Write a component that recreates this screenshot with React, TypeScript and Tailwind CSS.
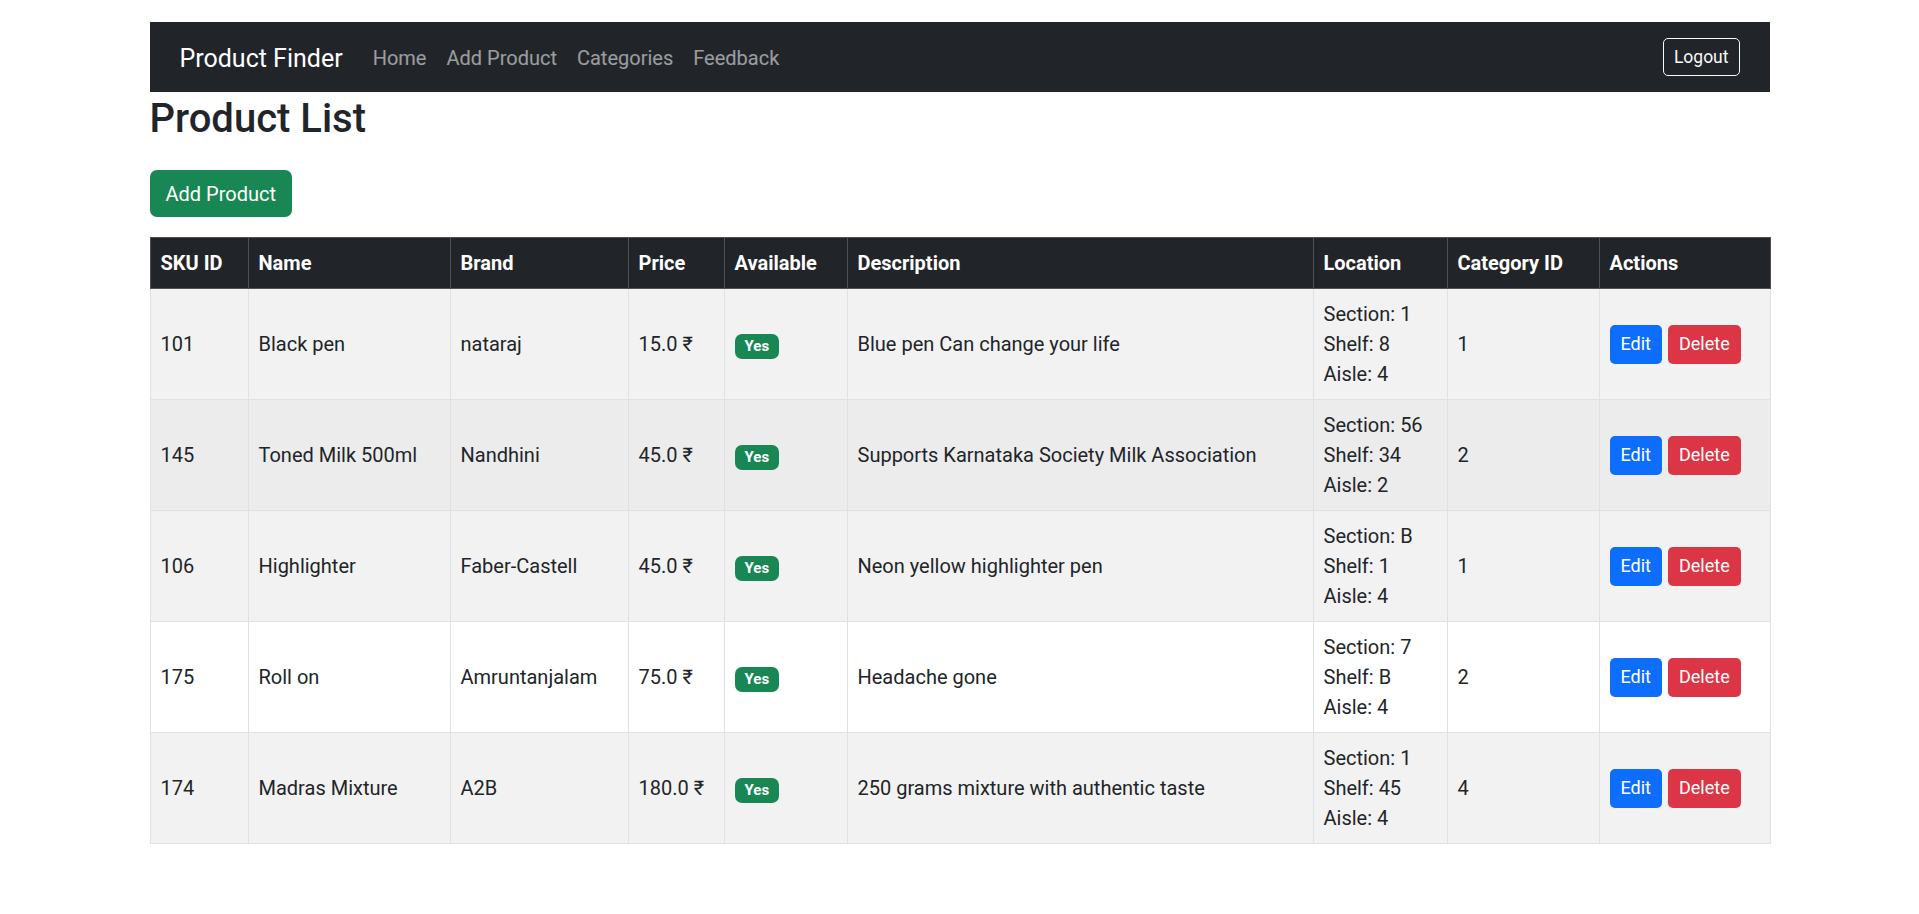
import React from "react";

type Product = {
  sku: number;
  name: string;
  brand: string;
  price: string;
  description: string;
  section: string;
  shelf: string;
  aisle: string;
  categoryId: number;
};

const products: Product[] = [
  { sku: 101, name: "Black pen", brand: "nataraj", price: "15.0", description: "Blue pen Can change your life", section: "1", shelf: "8", aisle: "4", categoryId: 1 },
  { sku: 145, name: "Toned Milk 500ml", brand: "Nandhini", price: "45.0", description: "Supports Karnataka Society Milk Association", section: "56", shelf: "34", aisle: "2", categoryId: 2 },
  { sku: 106, name: "Highlighter", brand: "Faber-Castell", price: "45.0", description: "Neon yellow highlighter pen", section: "B", shelf: "1", aisle: "4", categoryId: 1 },
  { sku: 175, name: "Roll on", brand: "Amruntanjalam", price: "75.0", description: "Headache gone", section: "7", shelf: "B", aisle: "4", categoryId: 2 },
  { sku: 174, name: "Madras Mixture", brand: "A2B", price: "180.0", description: "250 grams mixture with authentic taste", section: "1", shelf: "45", aisle: "4", categoryId: 4 },
];

// row backgrounds: striped, second row is hovered
const rowBg = ["bg-[#f2f2f2]", "bg-[#ececec]", "bg-[#f2f2f2]", "bg-white", "bg-[#f2f2f2]"];

const headers = ["SKU ID", "Name", "Brand", "Price", "Available", "Description", "Location", "Category ID", "Actions"];
const colWidths = ["w-[98px]", "w-[202px]", "w-[178px]", "w-[96px]", "w-[123px]", "w-[466px]", "w-[134px]", "w-[152px]", "w-[171px]"];

export default function App() {
  return (
    <div className="min-h-screen bg-white text-[#212529] font-['Roboto','Noto_Sans',sans-serif]">
      <div className="mx-auto w-[1620px] pt-[22px]">
        {/* NAVBAR */}
        <nav className="flex h-[70px] items-center justify-between bg-[#212529] px-[30px] pt-[2px]">
          <div className="flex items-center">
            <span className="mr-[20px] text-[25px] leading-[37px] text-white">Product Finder</span>
            <a className="px-[10px] text-[20px] leading-[30px] text-white/55">Home</a>
            <a className="px-[10px] text-[20px] leading-[30px] text-white/55">Add Product</a>
            <a className="px-[10px] text-[20px] leading-[30px] text-white/55">Categories</a>
            <a className="px-[10px] text-[20px] leading-[30px] text-white/55">Feedback</a>
          </div>
          <button className="-mt-[2px] h-[38px] rounded-[5px] border border-[#f8f9fa] px-[10px] text-[17.5px] leading-[26px] text-[#f8f9fa]">
            Logout
          </button>
        </nav>

        <h2 className="mt-[3px] text-[40px] font-medium leading-[48px]">Product List</h2>

        <div className="mt-[27px]">
          <button className="h-[47px] rounded-[7px] bg-[#198754] px-[16px] text-[20px] leading-[30px] text-white">
            Add Product
          </button>
        </div>

        {/* TABLE */}
        <table className="mt-[20px] w-[1620px] table-fixed border-collapse text-[20px] leading-[30px]">
          <colgroup>
            {colWidths.map((w, i) => (
              <col key={i} className={w} />
            ))}
          </colgroup>
          <thead className="bg-[#212529] text-white">
            <tr>
              {headers.map((h) => (
                <th key={h} className="border border-[#4d5154] px-[10px] py-[10px] text-left font-bold">
                  {h}
                </th>
              ))}
            </tr>
          </thead>
          <tbody>
            {products.map((p, i) => (
              <tr key={p.sku} className={rowBg[i]}>
                <td className="border border-[#dee2e6] px-[10px] py-[10px] align-middle">{p.sku}</td>
                <td className="border border-[#dee2e6] px-[10px] py-[10px] align-middle">{p.name}</td>
                <td className="border border-[#dee2e6] px-[10px] py-[10px] align-middle">{p.brand}</td>
                <td className="border border-[#dee2e6] px-[10px] py-[10px] align-middle">{p.price} ₹</td>
                <td className="border border-[#dee2e6] px-[10px] py-[10px] align-middle">
                  <span className="inline-block rounded-[7px] bg-[#198754] px-[10px] py-[5px] text-[15px] font-bold leading-[15px] text-white">
                    Yes
                  </span>
                </td>
                <td className="border border-[#dee2e6] px-[10px] py-[10px] align-middle">{p.description}</td>
                <td className="border border-[#dee2e6] px-[10px] py-[10px] align-middle">
                  <div>Section: {p.section}</div>
                  <div>Shelf: {p.shelf}</div>
                  <div>Aisle: {p.aisle}</div>
                </td>
                <td className="border border-[#dee2e6] px-[10px] py-[10px] align-middle">{p.categoryId}</td>
                <td className="border border-[#dee2e6] px-[10px] py-[10px] align-middle">
                  <div className="flex gap-[6px]">
                    <button className="h-[39px] rounded-[5px] bg-[#0d6efd] px-[11px] text-[18px] text-white">Edit</button>
                    <button className="h-[39px] rounded-[5px] bg-[#dc3545] px-[11px] text-[18px] text-white">Delete</button>
                  </div>
                </td>
              </tr>
            ))}
          </tbody>
        </table>
      </div>
    </div>
  );
}
